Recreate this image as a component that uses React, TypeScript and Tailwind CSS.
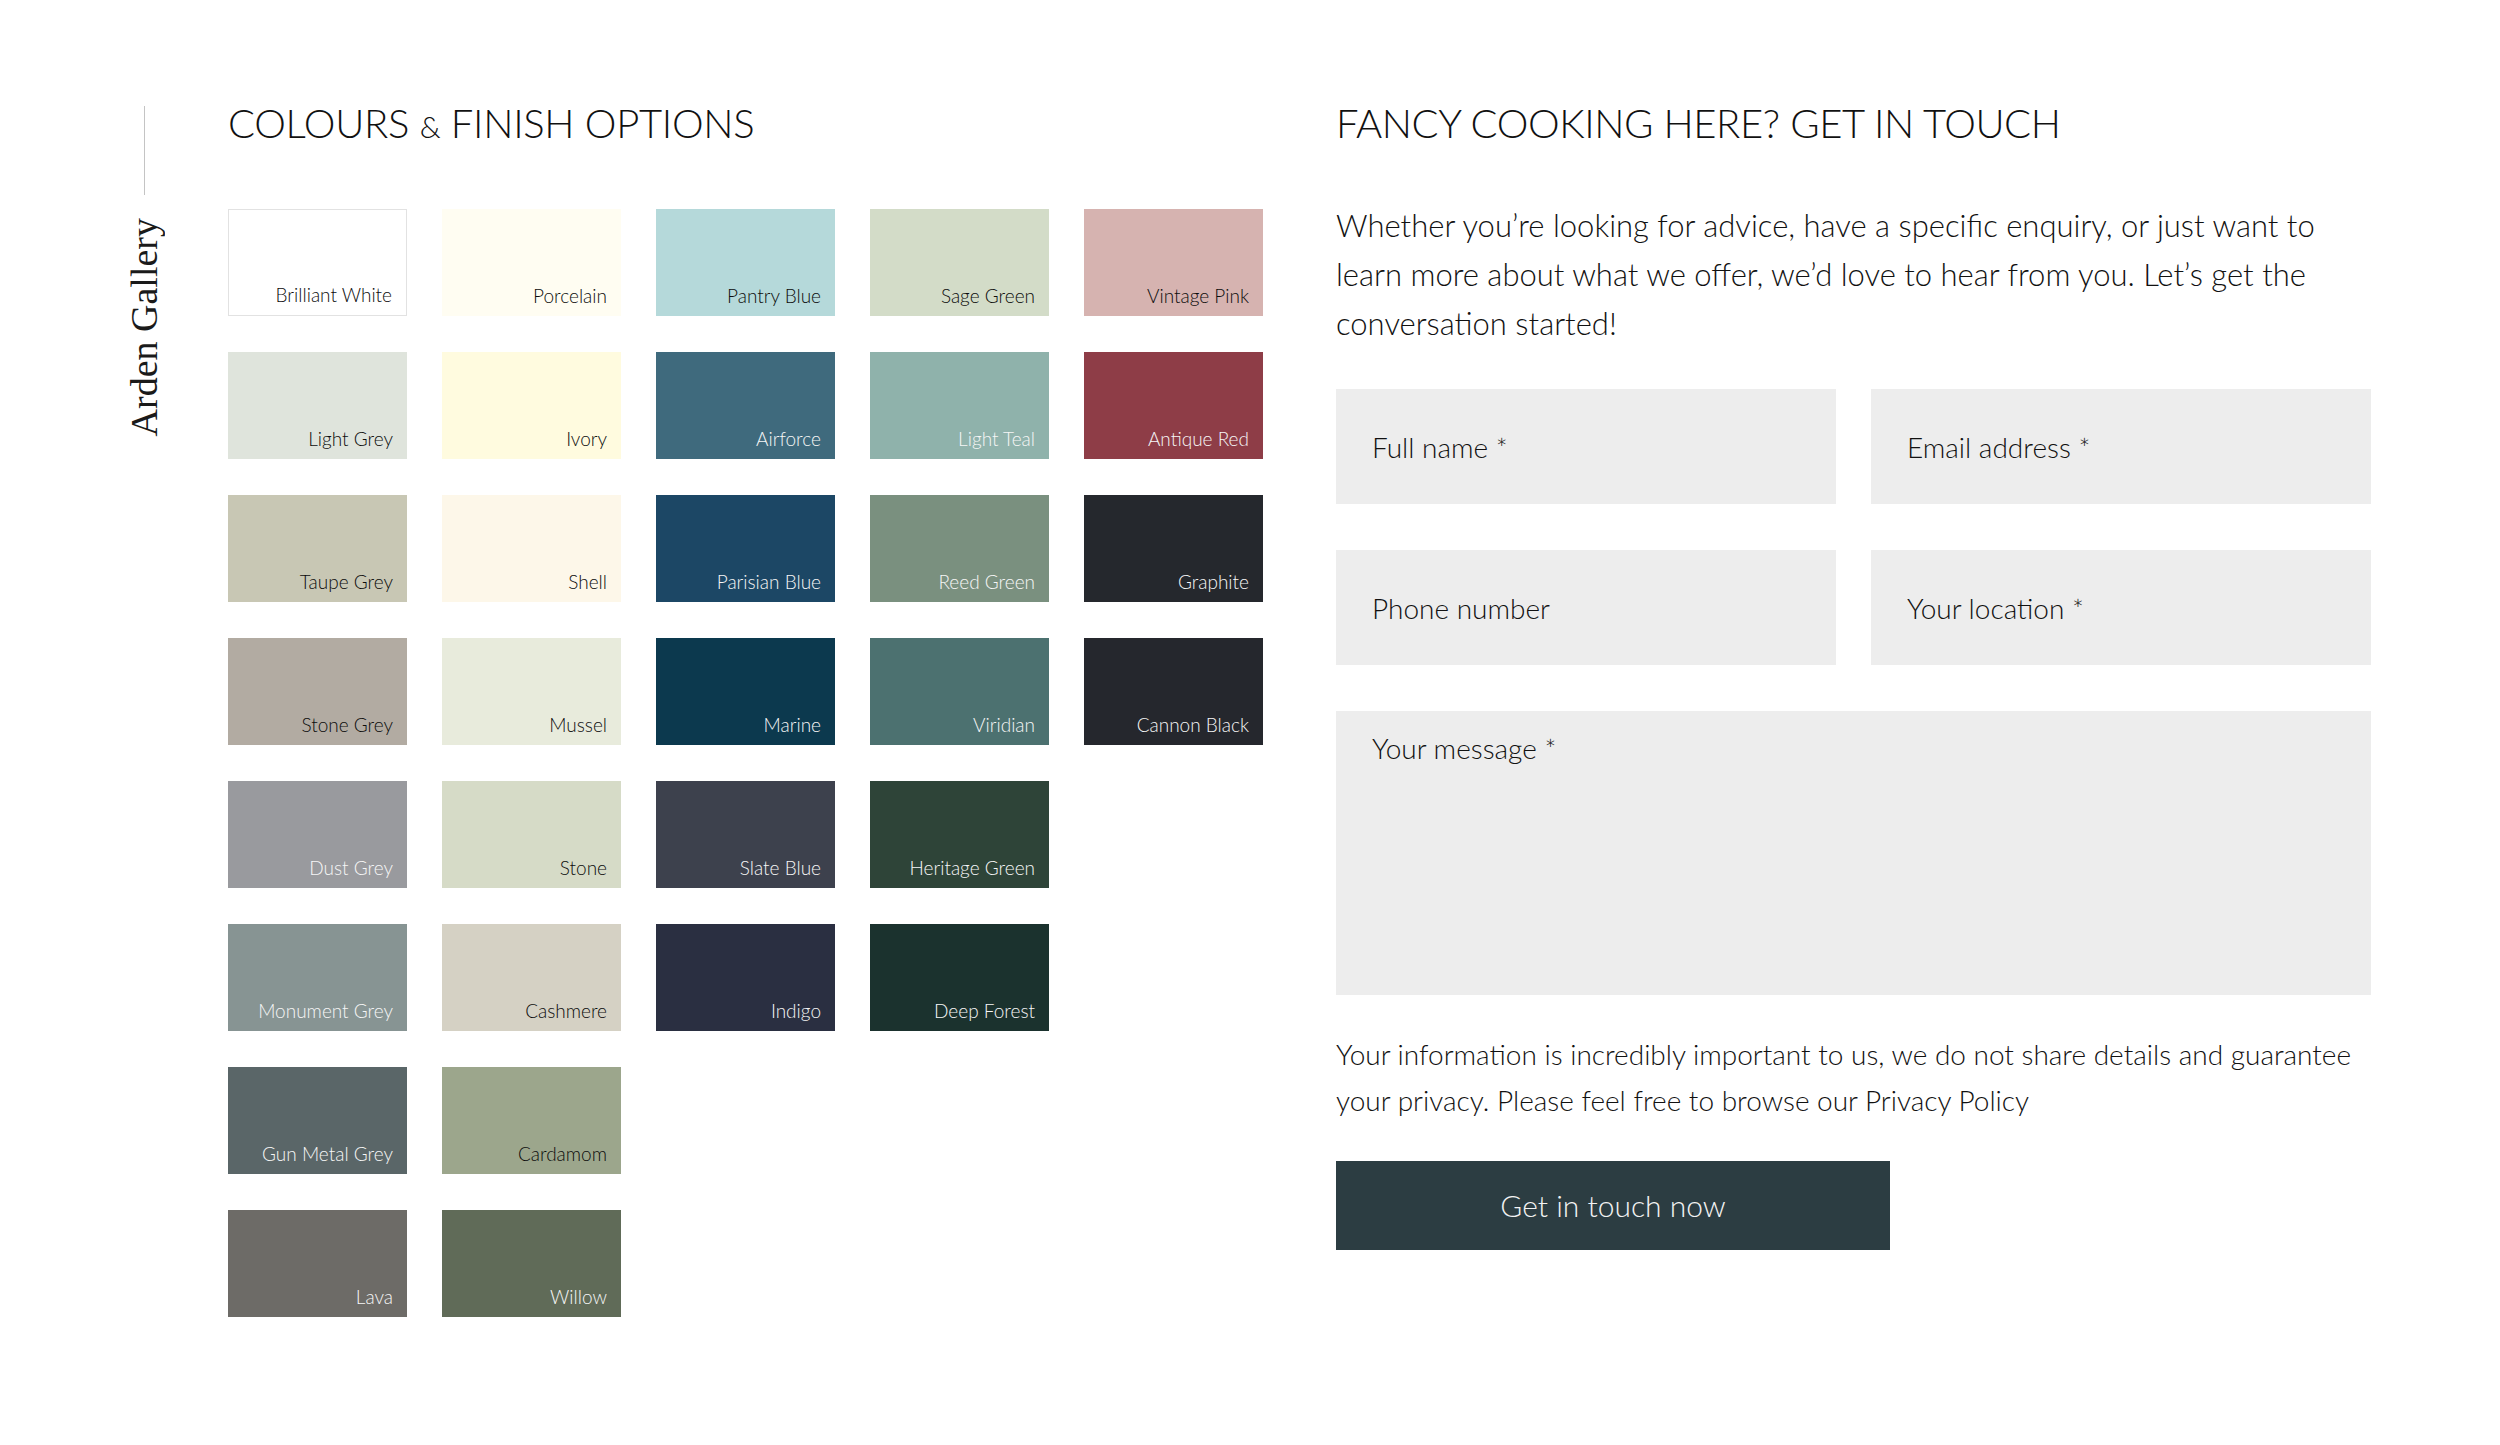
import React from "react";

type Sw = { name: string; bg: string; light?: boolean; border?: boolean };

const columns: Sw[][] = [
  [
    { name: "Brilliant White", bg: "#ffffff", border: true },
    { name: "Light Grey", bg: "#dfe4dc" },
    { name: "Taupe Grey", bg: "#c8c7b4" },
    { name: "Stone Grey", bg: "#b2aba2" },
    { name: "Dust Grey", bg: "#999a9e", light: true },
    { name: "Monument Grey", bg: "#879493", light: true },
    { name: "Gun Metal Grey", bg: "#5a6668", light: true },
    { name: "Lava", bg: "#6d6b67", light: true },
  ],
  [
    { name: "Porcelain", bg: "#fffdf2" },
    { name: "Ivory", bg: "#fffbdf" },
    { name: "Shell", bg: "#fdf7e9" },
    { name: "Mussel", bg: "#e8ebdc" },
    { name: "Stone", bg: "#d6dbc7" },
    { name: "Cashmere", bg: "#d5d1c4" },
    { name: "Cardamom", bg: "#9ca68c" },
    { name: "Willow", bg: "#606b58", light: true },
  ],
  [
    { name: "Pantry Blue", bg: "#b5d9da" },
    { name: "Airforce", bg: "#3f6a7d", light: true },
    { name: "Parisian Blue", bg: "#1c4765", light: true },
    { name: "Marine", bg: "#0c394e", light: true },
    { name: "Slate Blue", bg: "#3d414d", light: true },
    { name: "Indigo", bg: "#2a2f41", light: true },
  ],
  [
    { name: "Sage Green", bg: "#d3dcc8" },
    { name: "Light Teal", bg: "#8fb2ab", light: true },
    { name: "Reed Green", bg: "#7a907f", light: true },
    { name: "Viridian", bg: "#4c7170", light: true },
    { name: "Heritage Green", bg: "#2e4438", light: true },
    { name: "Deep Forest", bg: "#1b322e", light: true },
  ],
  [
    { name: "Vintage Pink", bg: "#d6b3b0" },
    { name: "Antique Red", bg: "#8e3d47", light: true },
    { name: "Graphite", bg: "#25282d", light: true },
    { name: "Cannon Black", bg: "#25272d", light: true },
  ],
];

function Swatch({ s }: { s: Sw }) {
  return (
    <div
      className={
        "flex h-[107px] w-[179px] items-end justify-end pb-[11px] pr-[14px] " +
        (s.border ? "border border-[#e2e2e2]" : "")
      }
      style={{ backgroundColor: s.bg }}
    >
      <span
        className={
          "text-[19px] font-light leading-none " +
          (s.light ? "text-[#f6f6f6]" : "text-[#0d0d0d]")
        }
      >
        {s.name}
      </span>
    </div>
  );
}

const inputCls =
  "h-[115px] w-full bg-[#ededed] px-[36px] text-[28px] font-light text-[#111111] outline-none placeholder:text-[#111111]";

export default function App() {
  return (
    <div className="min-h-screen bg-white font-['Lato','Liberation_Sans',sans-serif] text-[#111111]">
      <div className="flex pl-[125px] pt-[103px]">
        {/* Rail */}
        <div className="flex w-[38px] flex-col items-center">
          <div className="mt-[3px] h-[89px] w-px bg-[#c4c4c4]" />
          <div className="mt-[23px] rotate-180 font-['Liberation_Serif',serif] text-[38px] leading-none text-[#1a1a1a] [writing-mode:vertical-rl]">
            Arden Gallery
          </div>
        </div>

        {/* Colours */}
        <div className="ml-[65px] w-[1035px] shrink-0">
          <h2 className="text-[40px] font-light leading-none tracking-[-0.3px] text-[#111111]">
            COLOURS <span className="text-[30px]">&amp;</span> FINISH OPTIONS
          </h2>
          <div className="mt-[66px] flex gap-[35px]">
            {columns.map((col, i) => (
              <div key={i} className="flex flex-col gap-[36px]">
                {col.map((s) => (
                  <Swatch key={s.name} s={s} />
                ))}
              </div>
            ))}
          </div>
        </div>

        {/* Contact */}
        <div className="ml-[73px] w-[1035px] shrink-0">
          <h2 className="text-[40px] font-light leading-none tracking-[-0.4px] text-[#111111]">
            FANCY COOKING HERE? GET IN TOUCH
          </h2>
          <p className="mt-[58px] text-[31px] font-light leading-[49px] text-[#111111]">
            Whether you’re looking for advice, have a specific enquiry, or just want to learn more
            about what we offer, we’d love to hear from you. Let’s get the conversation started!
          </p>
          <form className="mt-[41px]" onSubmit={(e) => e.preventDefault()}>
            <div className="grid grid-cols-2 gap-x-[35px] gap-y-[46px]">
              <input className={inputCls} placeholder="Full name *" />
              <input className={inputCls} placeholder="Email address *" />
              <input className={inputCls} placeholder="Phone number" />
              <input className={inputCls} placeholder="Your location *" />
            </div>
            <textarea
              className="mt-[46px] block h-[284px] w-full resize-none bg-[#ededed] px-[36px] pt-[17px] text-[28px] font-light leading-[40px] text-[#111111] outline-none placeholder:text-[#111111]"
              placeholder="Your message *"
            />
            <p className="mt-[36px] text-[28px] font-light leading-[46px] text-[#111111]">
              Your information is incredibly important to us, we do not share details and guarantee
              your privacy. Please feel free to browse our Privacy Policy
            </p>
            <button
              type="submit"
              className="mt-[38px] h-[89px] w-[554px] bg-[#2c3d42] text-[30px] font-light text-[#f3f3f3]"
            >
              Get in touch now
            </button>
          </form>
        </div>
      </div>
    </div>
  );
}
